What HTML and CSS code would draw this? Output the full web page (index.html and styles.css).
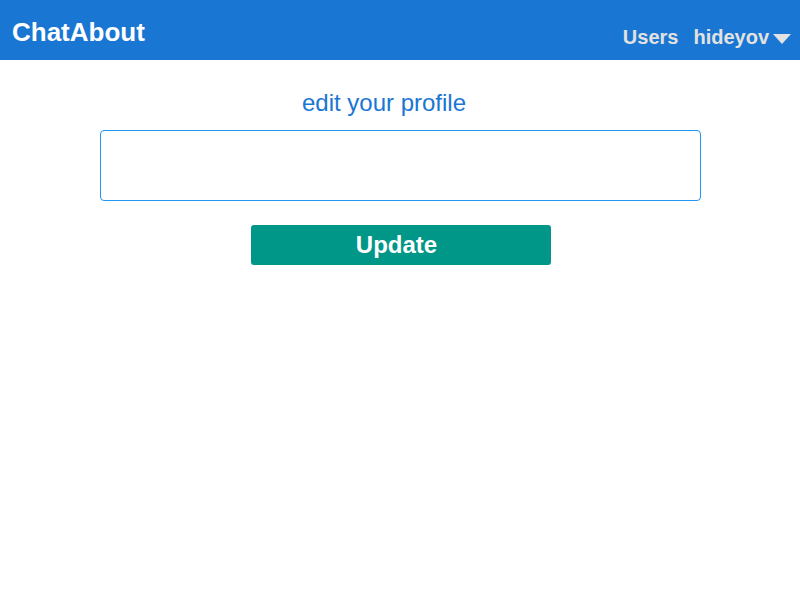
FILE: index.html
```html
<!DOCTYPE html>
<html>
<head>
<meta charset="utf-8">
<link rel="stylesheet" href="styles.css">
</head>
<body>
<header class="topbar">
  <div class="brand">ChatAbout</div>
  <nav class="nav">
    <span class="nav-link">Users</span>
    <span class="nav-link user">hideyov<svg class="caret" width="20" height="12" viewBox="0 0 20 12"><polygon points="1,1 19,1 10,11" fill="#e2e2e2"/></svg></span>
  </nav>
</header>
<main class="content">
  <h2 class="title">edit your profile</h2>
  <textarea class="profile-input"></textarea>
  <button class="update-btn">Update</button>
</main>
</body>
</html>
```
FILE: styles.css
```css
* { box-sizing: border-box; }
html, body { margin: 0; padding: 0; background: #fff; }
body { font-family: "Liberation Sans", Arial, sans-serif; }
.topbar {
  height: 60px;
  background: #1976d2;
  display: flex;
  justify-content: space-between;
  align-items: flex-start;
  padding: 0 8px 0 12px;
}
.brand {
  color: #fff;
  font-weight: bold;
  font-size: 26px;
  line-height: 30px;
  margin-top: 17px;
}
.nav {
  display: flex;
  gap: 15px;
  margin-top: 24px;
}
.nav-link {
  color: #e2e2e2;
  font-weight: bold;
  font-size: 20px;
  line-height: 26px;
  display: flex;
  align-items: center;
}
.caret { margin-left: 3px; margin-top: 4px; }
.content {
  display: flex;
  flex-direction: column;
  align-items: center;
}
.title {
  margin: 28px 0 0 0;
  font-size: 24px;
  font-weight: normal;
  color: #1976d2;
  line-height: 30px;
  padding-right: 32px;
}
.profile-input {
  margin-top: 12px;
  width: 601px;
  height: 71px;
  border: 1px solid #2196f3;
  border-radius: 4px;
  resize: none;
  outline: none;
  font-family: inherit;
}
.update-btn {
  margin-top: 24px;
  margin-left: 1px;
  width: 300px;
  height: 40px;
  background: #009688;
  border: none;
  border-radius: 3px;
  color: #fff;
  font-family: "Liberation Sans", Arial, sans-serif;
  font-weight: bold;
  font-size: 24px;
  padding: 0 8px 0 0;
}
```
